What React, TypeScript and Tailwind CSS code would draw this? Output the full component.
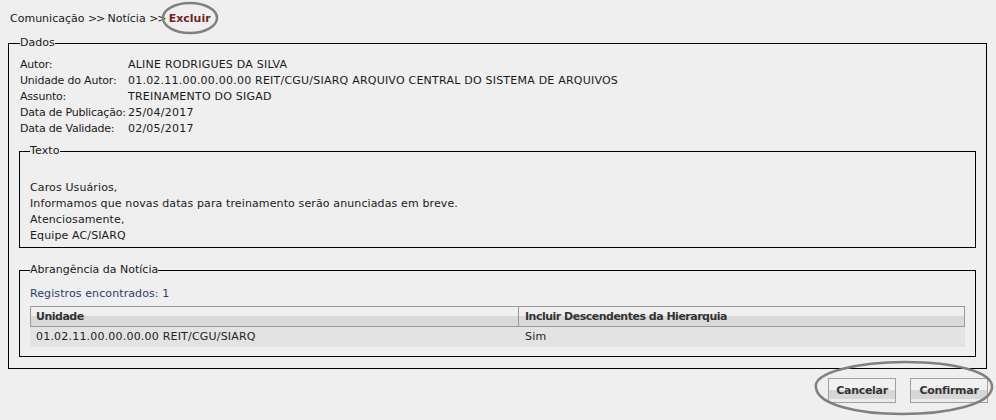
import React from "react";

const rows: [string, string][] = [
  ["Autor:", "ALINE RODRIGUES DA SILVA"],
  ["Unidade do Autor:", "01.02.11.00.00.00.00 REIT/CGU/SIARQ ARQUIVO CENTRAL DO SISTEMA DE ARQUIVOS"],
  ["Assunto:", "TREINAMENTO DO SIGAD"],
  ["Data de Publicação:", "25/04/2017"],
  ["Data de Validade:", "02/05/2017"],
];

const btn =
  "h-[25px] border border-[#a0a0a0] bg-[linear-gradient(to_bottom,#f1f1f1_0%,#f1f1f1_48%,#d7d7d7_48%,#d7d7d7_85%,#ececec_85%)] font-bold text-[#333] text-[11px] tracking-[-0.3px]";

export default function App() {
  return (
    <div className="relative w-[996px] h-[420px] overflow-hidden bg-[#efefef] font-['DejaVu_Sans','Verdana',sans-serif] text-[11px] leading-[16px] text-[#1a1a1a]">
      <div className="pl-[10px] pt-[11px] h-[27px] whitespace-nowrap">
        Comunicação <span className="tracking-[-1.2px]">&gt;&gt;</span> Notícia{" "}
        <span className="tracking-[-1.2px]">&gt;&gt;</span>{" "}
        <span className="font-bold text-[#7a1e1e]">Excluir</span>
      </div>

      <fieldset className="mt-[8px] ml-[8px] mr-[9px] border border-black pl-[11px] pr-[10px] pt-[6px] pb-[11px]">
        <legend className="leading-[16px]">Dados</legend>
        <div className="grid grid-cols-[108px_1fr]">
          {rows.map(([k, v]) => (
            <React.Fragment key={k}>
              <div className="whitespace-nowrap tracking-[-0.2px]">{k}</div>
              <div className="whitespace-nowrap tracking-[0.22px]">{v}</div>
            </React.Fragment>
          ))}
        </div>

        <fieldset className="mt-[6px] ml-[-1px] border border-black pl-[10px] pr-[10px] pt-[21px] pb-[3px] tracking-[0.12px]">
          <legend className="leading-[16px]">Texto</legend>
          <div>Caros Usuários,</div>
          <div>Informamos que novas datas para treinamento serão anunciadas em breve.</div>
          <div>Atenciosamente,</div>
          <div>Equipe AC/SIARQ</div>
        </fieldset>

        <fieldset className="mt-[14px] ml-[-1px] border border-black pl-[10px] pr-[10px] pt-[8px] pb-[9px]">
          <legend className="leading-[16px]">Abrangência da Notícia</legend>
          <div className="text-[#2c3c6c] tracking-[0.1px]">Registros encontrados: 1</div>
          <div className="mt-[4px]">
            <div className="flex h-[21px] border border-[#9a9a9a] bg-[linear-gradient(to_bottom,#efefef_0%,#efefef_45%,#d9d9d9_45%,#d9d9d9_100%)] font-bold text-[#333] tracking-[-0.5px]">
              <div className="w-[488px] border-r border-[#9a9a9a] pl-[5px] flex items-center">Unidade</div>
              <div className="flex-1 pl-[6px] flex items-center">Incluir Descendentes da Hierarquia</div>
            </div>
            <div className="flex h-[20px] bg-[#e3e3e3] text-[#222] tracking-[0.2px]">
              <div className="w-[489px] pl-[6px] flex items-center">01.02.11.00.00.00.00 REIT/CGU/SIARQ</div>
              <div className="flex-1 pl-[6px] flex items-center">Sim</div>
            </div>
          </div>
        </fieldset>
      </fieldset>

      <div className="flex justify-end gap-[14px] mt-[9px] pr-[8px]">
        <button className={`w-[68px] ${btn}`}>Cancelar</button>
        <button className={`w-[78px] ${btn}`}>Confirmar</button>
      </div>

      <svg className="absolute left-0 top-0 pointer-events-none" width="996" height="420">
        <ellipse cx="190" cy="18" rx="27" ry="15" fill="none" stroke="#808080" strokeWidth="2.5" />
        <path d="M 816 388 C 812 372, 860 362, 905 362 C 955 362, 994 372, 992 388 C 990 404, 950 414, 902 414 C 855 414, 818 404, 816 388 Z" fill="none" stroke="#808080" strokeWidth="2.5" />
      </svg>
    </div>
  );
}
